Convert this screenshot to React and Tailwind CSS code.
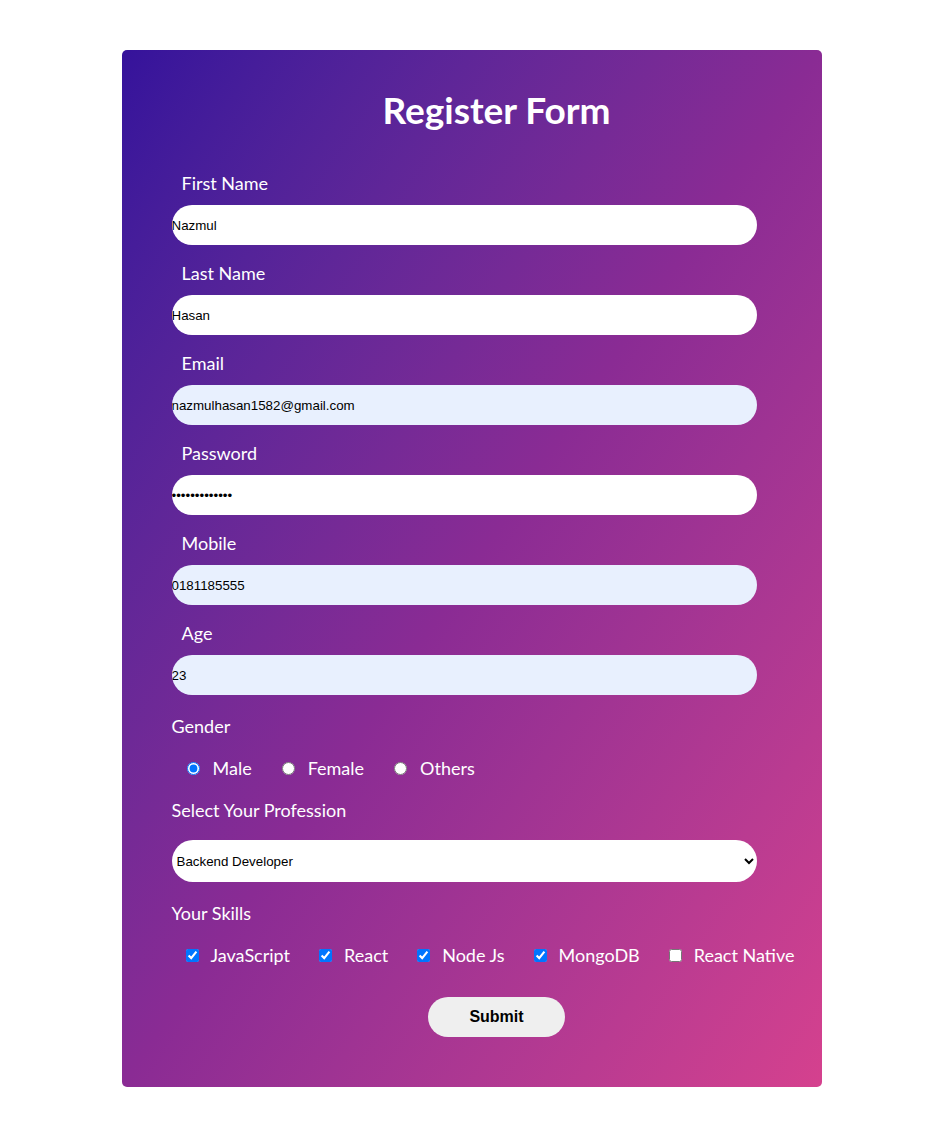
import React, { useState } from "react";

const fields = [
  { label: "First Name", type: "text", value: "Nazmul", auto: false },
  { label: "Last Name", type: "text", value: "Hasan", auto: false },
  { label: "Email", type: "email", value: "nazmulhasan1582@gmail.com", auto: true },
  { label: "Password", type: "password", value: "nazmul1582abc", auto: false },
  { label: "Mobile", type: "text", value: "0181185555", auto: true },
  { label: "Age", type: "text", value: "23", auto: true },
];

const skills = [
  { name: "JavaScript", checked: true },
  { name: "React", checked: true },
  { name: "Node Js", checked: true },
  { name: "MongoDB", checked: true },
  { name: "React Native", checked: false },
];

const App = () => {
  const [gender, setGender] = useState("male");

  return (
    <div className="min-h-[1137px] bg-white flex justify-center pt-[50px] font-['Lato',sans-serif]">
      <div className="w-[700px] h-[1037px] rounded-[5px] bg-linear-to-br from-[#35129b] via-[#8a2b94] to-[#d5418e] text-white">
        <h1 className="pt-[36px] pl-[50px] text-center text-[37px] leading-[48px] font-bold">
          Register Form
        </h1>

        <form className="px-[50px] mt-[37px]" onSubmit={(e) => e.preventDefault()}>
          {fields.map((f, i) => (
            <div key={f.label} className={i === 0 ? "" : "mt-[16px]"}>
              <label className="block pl-[10px] text-[18px] leading-[24px]">{f.label}</label>
              <input
                type={f.type}
                defaultValue={f.value}
                className={`mt-[10px] block w-[585px] h-[40px] rounded-full outline-none text-black text-[13.33px] font-['Liberation_Sans',Arial,sans-serif] ${
                  f.auto ? "bg-[#e8f0fe]" : "bg-white"
                }`}
              />
            </div>
          ))}

          {/* Gender */}
          <div className="mt-[19px] text-[18px] leading-[24px]">Gender</div>
          <div className="mt-[18px] flex items-center h-[24px] pl-[15px] text-[18px] whitespace-nowrap">
            {["Male", "Female", "Others"].map((g) => (
              <label key={g} className="flex items-center shrink-0 mr-[30px]">
                <input
                  type="radio"
                  name="gender"
                  checked={gender === g.toLowerCase()}
                  onChange={() => setGender(g.toLowerCase())}
                  className="w-[13px] h-[13px] m-0 accent-[#0075ff]"
                />
                <span className="ml-[13px]">{g}</span>
              </label>
            ))}
          </div>

          {/* Profession */}
          <div className="mt-[18px] text-[18px] leading-[24px]">Select Your Profession</div>
          <select
            defaultValue="backend"
            className="mt-[18px] block w-[585px] h-[42px] rounded-full bg-white text-black text-[13.33px] pl-[1px] pr-[6px] outline-none font-['Liberation_Sans',Arial,sans-serif]"
          >
            <option value="frontend">Frontend Developer</option>
            <option value="backend">Backend Developer</option>
            <option value="fullstack">Full Stack Developer</option>
          </select>

          {/* Skills */}
          <div className="mt-[19px] text-[18px] leading-[24px]">Your Skills</div>
          <div className="mt-[18px] flex items-center h-[24px] pl-[14px] text-[18px] whitespace-nowrap">
            {skills.map((s) => (
              <label key={s.name} className="flex items-center shrink-0 mr-[29px]">
                <input
                  type="checkbox"
                  defaultChecked={s.checked}
                  className="w-[13px] h-[13px] m-0 accent-[#0075ff]"
                />
                <span className="ml-[12px]">{s.name}</span>
              </label>
            ))}
          </div>

          <div className="mt-[30px] flex justify-center pl-[50px]">
            <button
              type="submit"
              className="w-[137px] h-[40px] rounded-full bg-[#efefef] text-black text-[16px] font-bold font-['Liberation_Sans',Arial,sans-serif]"
            >
              Submit
            </button>
          </div>
        </form>
      </div>
    </div>
  );
};

export default App;
